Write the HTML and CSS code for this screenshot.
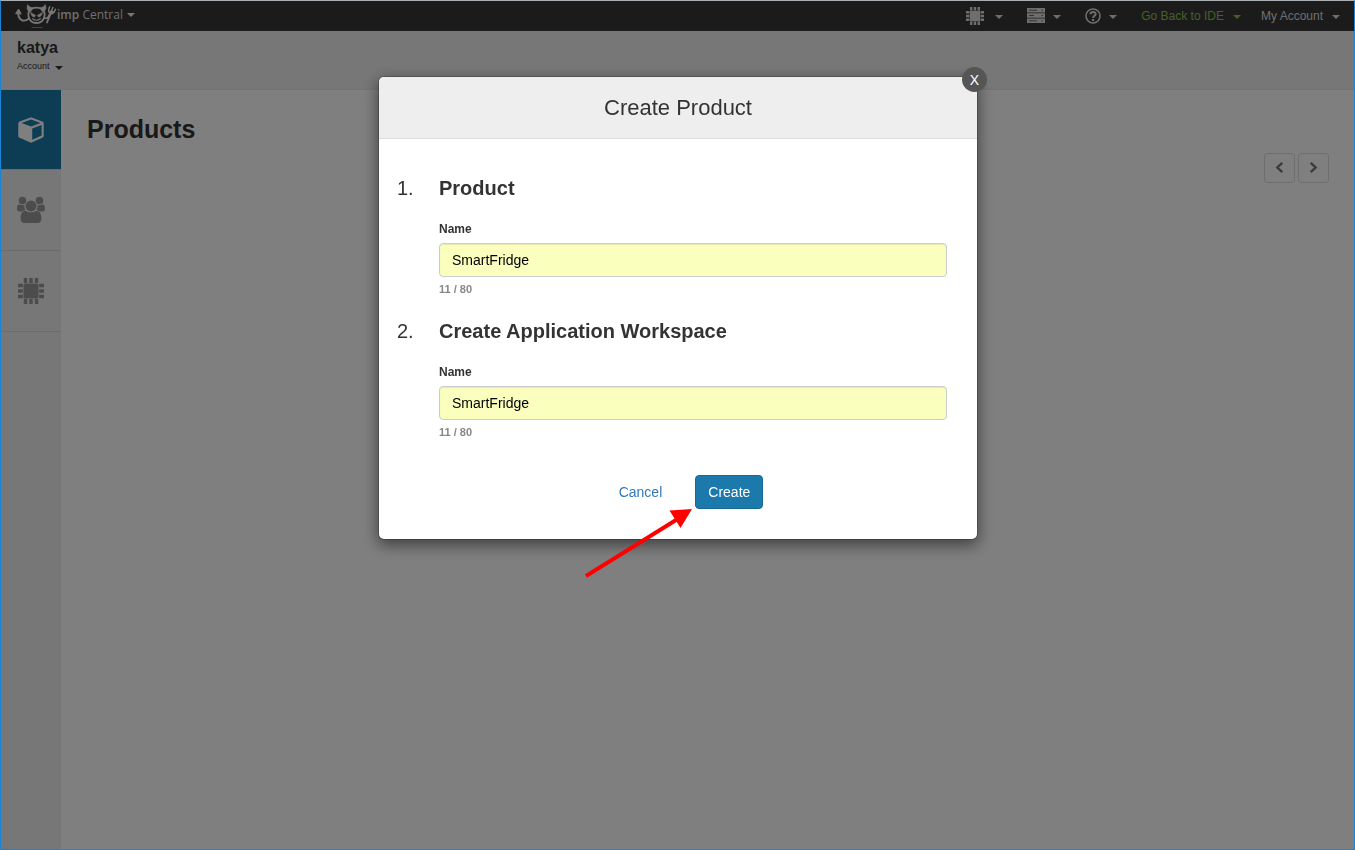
FILE: index.html
```html
<!DOCTYPE html>
<html lang="en">
<head>
<meta charset="utf-8">
<title>imp Central - Create Product</title>
<link rel="stylesheet" href="styles.css">
</head>
<body>
<svg class="defs" aria-hidden="true">
  <symbol id="chip" viewBox="0 0 26 26">
    <rect x="5.500" y="5.500" width="15" height="15" rx="1.500"/>
    <path d="M7.500 0v4.900M13 0v4.900M18.500 0v4.900M7.500 21.100V26M13 21.100V26M18.500 21.100V26M0 7.500h4.900M0 13h4.900M0 18.500h4.900M21.100 7.500H26M21.100 13H26M21.100 18.500H26" stroke="currentColor" stroke-width="3.500"/>
  </symbol>
</svg>
<div class="page">
  <header class="topbar">
    <button class="brand" type="button">
      <svg class="brand-logo" viewBox="0 0 42 26" width="42" height="26" fill="none" stroke="currentColor" stroke-width="1.800" stroke-linecap="round" aria-hidden="true">
        <path d="M14 15.500C8 20.500 2.500 16 3.300 8.500"/>
        <path d="M.8 10.400 3.600 6l2.400 4.700z" fill="currentColor" stroke-width="1"/>
        <path d="M15 9C12 8 11.500 4.500 12.800 1.500c1 2.200 2.700 3 5.200 3.300zM28 9c3-1 3.500-4.500 2.200-7.500-1 2.200-2.700 3-5.200 3.300z" fill="currentColor" stroke-width=".6"/>
        <path d="M17 5.500c3-1.200 6-1.200 9 0 3.200 2 4.200 5 3.400 8.200-1 4-4.100 6.300-7.900 6.300s-6.900-2.300-7.900-6.300c-.8-3.200.2-6.200 3.400-8.200z"/>
        <path d="m15.800 9.800 4.600 2.600c-.5 2.500-3.800 2-4.600-2.600zM27.200 9.800l-4.600 2.600c.5 2.500 3.800 2 4.600-2.600z" fill="currentColor" stroke-width=".8"/>
        <path d="M17.500 15.800c2.500 1.800 5.500 1.800 8 0" stroke-width="1.200"/>
        <path d="M29.500 15c2.500 1.200 3.800-.5 4.700-3M32 19.500 36 10"/>
        <path d="M34.700 3.800c-1.400 3-1.600 5.800.7 6.800 2.300.9 4-1.200 5.100-4.400M37.800 4.500l-1.800 5" stroke-width="1.500"/>
        <path d="M34.600 7.500c-.2 4 3 4.500 4.800.7z" fill="currentColor" stroke="none"/>
        <path d="M17 24.500h10" stroke-width="1" opacity=".45"/>
      </svg>
      <span class="brand-name"><b>imp</b> Central</span>
      <span class="caret"></span>
    </button>
    <nav class="topnav">
      <button class="nav-item nav-icon" type="button" aria-label="Devices"><svg width="18" height="18" fill="currentColor"><use href="#chip"/></svg><span class="caret"></span></button>
      <button class="nav-item nav-icon" type="button" aria-label="Servers">
        <svg width="18" height="15" viewBox="0 0 18 15" fill="currentColor"><path d="M0 0h18v4.400H0zM0 5.300h18v4.400H0zM0 10.600h18V15H0z"/><path d="M2 2.200h8M2 7.500h5M2 12.800h8M14.500 2.200H16M14.500 7.500H16M14.500 12.800H16" stroke="#363636" stroke-width=".7"/></svg><span class="caret"></span>
      </button>
      <button class="nav-item nav-icon" type="button" aria-label="Help">
        <svg width="16" height="16" viewBox="0 0 16 16" fill="none" stroke="currentColor"><circle cx="8" cy="8" r="7" stroke-width="1.600"/><path d="M5.500 6.300c.1-3.200 5.200-3.100 5.100-.1C10.500 7.900 8.100 7.700 8.100 9.900" stroke-width="2.100"/><path d="M7 11h2.200v2H7z" fill="currentColor" stroke="none"/></svg><span class="caret"></span>
      </button>
      <button class="nav-item nav-ide" type="button">Go Back to IDE<span class="caret"></span></button>
      <button class="nav-item" type="button">My Account<span class="caret"></span></button>
    </nav>
  </header>
  <div class="account">
    <div class="account-name">katya</div>
    <button class="account-menu" type="button">Account<span class="caret"></span></button>
  </div>
  <div class="body">
    <nav class="sidebar">
      <a class="side-item active" href="#products" aria-label="Products">
        <svg width="26" height="26" viewBox="0 0 26 26" fill="currentColor"><path fill-rule="evenodd" d="M13 .3 25 4.800 25.700 6v13.500l-.7 1L13 25.700 1 20.500l-.7-1V6L1 4.800zM13 2.500 3.500 6 13 9.500 22.500 6zM14.200 11.500v11.200l9.400-4.300V8z"/></svg>
      </a>
      <a class="side-item" href="#team" aria-label="Collaborators">
        <svg width="28" height="28" viewBox="0 0 28 28" fill="currentColor"><circle cx="5.500" cy="4.500" r="3.800"/><circle cx="22.500" cy="4.500" r="3.800"/><path d="M2.500 8.300c1.800 1 3.500 1.200 5 .5-.4 2 0 3.800 1 5.200-1.200.2-2.200.7-3 1.500H2.500C.8 15.500 0 14.500 0 12.500 0 10 .9 8.300 2.500 8.300zM25.500 8.300c-1.800 1-3.500 1.200-5 .5.4 2 0 3.800-1 5.200 1.200.2 2.200.7 3 1.500h3c1.700 0 2.500-1 2.500-3 0-2.500-.9-4.200-2.500-4.200z"/><circle cx="14" cy="9.900" r="5.500"/><path d="M8.500 14.800c3.500 2.300 7.500 2.300 11 0 3.300.3 4.900 3.200 4.900 7.400 0 3.200-1.200 4.800-4 4.800H7.600c-2.800 0-4-1.600-4-4.800 0-4.200 1.600-7.100 4.900-7.400z"/></svg>
      </a>
      <a class="side-item" href="#devices" aria-label="Devices"><svg width="26" height="26" fill="currentColor"><use href="#chip"/></svg></a>
    </nav>
    <main class="content">
      <h1>Products</h1>
      <div class="pager">
        <button type="button" aria-label="Previous page"><svg width="9" height="12" viewBox="0 0 9 12" fill="none" stroke="currentColor" stroke-width="2.400"><path d="M7.300.8 2.300 5.500l5 4.700"/></svg></button>
        <button type="button" aria-label="Next page"><svg width="9" height="12" viewBox="0 0 9 12" fill="none" stroke="currentColor" stroke-width="2.400"><path d="m1.700.8 5 4.700-5 4.700"/></svg></button>
      </div>
    </main>
  </div>
</div>

<div class="overlay">
  <form class="modal" role="dialog" aria-labelledby="dialog-title">
    <button class="close" type="button" aria-label="Close">X</button>
    <h2 class="modal-title" id="dialog-title">Create Product</h2>
    <div class="modal-body">
      <ol class="steps">
        <li class="step">
          <span class="step-number">1.</span>
          <div class="step-fields">
            <h3>Product</h3>
            <label for="product-name">Name</label>
            <input id="product-name" type="text" value="SmartFridge" maxlength="80">
            <span class="count">11 / 80</span>
          </div>
        </li>
        <li class="step">
          <span class="step-number">2.</span>
          <div class="step-fields">
            <h3>Create Application Workspace</h3>
            <label for="workspace-name">Name</label>
            <input id="workspace-name" type="text" value="SmartFridge" maxlength="80">
            <span class="count">11 / 80</span>
          </div>
        </li>
      </ol>
      <div class="actions">
        <button class="btn btn-link" type="button">Cancel</button>
        <button class="btn btn-primary" type="submit">Create</button>
      </div>
    </div>
    <svg class="pointer" width="108" height="70" viewBox="0 0 108 70" aria-hidden="true"><path d="M1 67 91 11" stroke="#f00" stroke-width="4"/><path d="M107 0 84.500 1.500 95.500 19z" fill="#f00"/></svg>
  </form>
</div>
<div class="frame"></div>
</body>
</html>
```

FILE: styles.css
```css
* { box-sizing: border-box; }
body {
  margin: 0;
  font-family: "Liberation Sans", Arial, sans-serif;
  font-size: 14px;
  line-height: 20px;
  color: #333;
}
button { border: 0; padding: 0; background: none; color: inherit; font: inherit; cursor: pointer; }
svg { display: block; flex: none; }
.defs { position: absolute; width: 0; height: 0; }
.page { display: flex; flex-direction: column; min-height: 100vh; padding: 1px; background: #fff; }
.caret {
  display: inline-block;
  border: 4px solid transparent;
  border-top-color: currentColor;
  border-bottom: 0;
}

.topbar { display: flex; justify-content: space-between; height: 30px; padding: 0 14px; background: #363636; color: #eee; }
.brand { display: flex; align-items: center; }
.brand-name { font-family: "Open Sans", sans-serif; font-size: 12px; line-height: 26px; padding-bottom: 2px; color: #ddd; }
.brand-name b { font-weight: 600; }
.brand .caret { margin: 0 0 2px 4px; }
.topnav { display: flex; align-items: center; gap: 20px; font-size: 12px; }
.nav-item { display: flex; align-items: center; gap: 9px; color: #ddd; }
.nav-item .caret { margin-top: 2px; }
.nav-icon { gap: 8px; margin-right: 4px; }
.nav-icon svg { margin-bottom: 1px; }
.nav-icon:first-child { gap: 11px; }
.nav-ide { color: #8cc04b; }

.account { height: 59px; padding: 7px 16px; background: #eee; border-bottom: 1px solid #e7e7e7; }
.account-name { font-size: 16px; font-weight: bold; }
.account-menu { display: flex; align-items: center; gap: 5px; font-size: 9px; line-height: 16px; }
.account-menu .caret { margin-top: 3px; }

.body { display: flex; flex: 1; }
.sidebar { width: 60px; background: #eee; }
.side-item { display: flex; align-items: center; justify-content: center; height: 81px; border-bottom: 1px solid #d9d9d9; color: #999; }
.side-item.active { height: 80px; background: #1b7aab; color: #fff; }
.content { flex: 1; padding: 24px 25px 24px 26px; }
h1 { margin: 0; font-size: 25px; line-height: 30px; }
.pager { display: flex; justify-content: flex-end; gap: 3px; margin-top: 9px; }
.pager button { display: flex; align-items: center; justify-content: center; width: 31px; height: 30px; border: 1px solid #ddd; border-radius: 3px; color: #777; }

.overlay { position: fixed; inset: 0; padding: 76px 20px 20px 21px; background: rgba(0, 0, 0, .5); }
.modal {
  position: relative;
  max-width: 600px;
  margin: 0 auto;
  background: #fff;
  background-clip: padding-box;
  border: 1px solid rgba(0, 0, 0, .2);
  border-radius: 6px;
  box-shadow: 0 5px 15px rgba(0, 0, 0, .5);
}
.close { position: absolute; top: -10px; right: -10px; width: 25px; height: 25px; border-radius: 50%; background: #555; color: #fff; }
.modal-title { margin: 0; padding: 16px; border-bottom: 1px solid #ddd; border-radius: 5px 5px 0 0; background: #eee; font-size: 22px; font-weight: normal; line-height: 29px; text-align: center; }
.modal-body { padding: 37px 30px 30px 18px; }
.steps { display: flex; flex-direction: column; gap: 20px; margin: 0; padding: 0; list-style: none; }
.step { display: flex; }
.step-number { width: 42px; font-size: 20px; line-height: 25px; }
.step-fields { display: flex; flex: 1; flex-direction: column; }
h3 { margin: 0 0 18px; font-size: 20px; line-height: 25px; }
label { margin-bottom: 4px; font-size: 12px; font-weight: bold; line-height: 20px; }
.step-fields input {
  width: 100%;
  height: 34px;
  padding: 6px 12px;
  border: 1px solid #ccc;
  border-radius: 4px;
  background: #faffbd;
  box-shadow: inset 0 1px 1px rgba(0, 0, 0, .08);
  color: #000;
  font: inherit;
}
.count { margin-top: 3px; padding-bottom: 1px; color: #888; font-size: 11px; font-weight: bold; line-height: 18px; }
.actions { display: flex; justify-content: center; gap: 20px; margin-top: 33px; padding-left: 25px; }
.btn { height: 34px; padding: 6px 12px; border: 1px solid transparent; border-radius: 4px; }
.btn-link { color: #337ab7; }
.btn-primary { border-color: #176a94; background: #1b7aab; color: #fff; }
.pointer { position: absolute; left: 206px; top: 432px; pointer-events: none; }
.frame { position: fixed; inset: 0; border: 1px solid #1883d7; border-top-color: #a9afb2; pointer-events: none; }
```
